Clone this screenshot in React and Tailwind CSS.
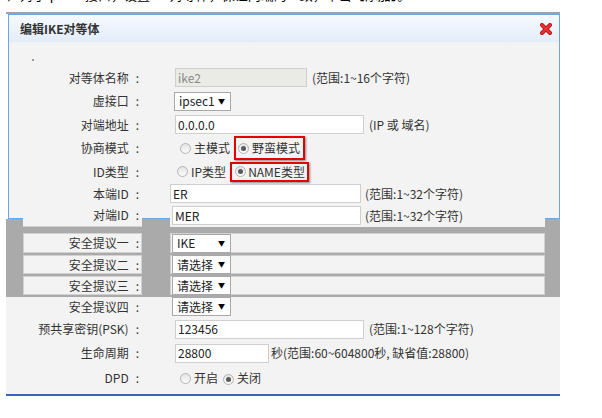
import React from "react";

const Radio = ({ checked }) => (
  <span className="inline-flex w-[11px] h-[11px] shrink-0 rounded-full border border-[#b3b3b3] bg-[linear-gradient(#e4e4e4,#fbfbfb)] items-center justify-center">
    {checked && <span className="w-[5px] h-[5px] rounded-full bg-[#5a5a5a]" />}
  </span>
);

const Colon = () => <span className="ml-[7px]">:</span>;

const Select = ({ children, cls }) => (
  <div className={"h-[19px] border border-[#a8a8a8] bg-white flex items-center pl-[4px] text-[#222] " + cls}>
    <span>{children}</span>
    <span className="ml-auto mr-[5px] text-[7px] text-black">▼</span>
  </div>
);

const Input = ({ children, cls }) => (
  <div className={"h-[19px] border border-[#cfcfcf] bg-white flex items-center pl-[2px] text-[#222] " + cls}>
    {children}
  </div>
);

const CloseIcon = () => (
  <svg width="12" height="12" viewBox="0 0 12 12">
    <path d="M2 2 L10 10 M10 2 L2 10" stroke="#b01818" strokeWidth="4" strokeLinecap="round" />
    <path d="M2 2 L10 10 M10 2 L2 10" stroke="#ee3030" strokeWidth="2.4" strokeLinecap="round" />
  </svg>
);

const GapLeft = () => (
  <div className="w-[17px] flex flex-col">
    <div className="h-[14px] ml-[2px] border-l border-[#6fa3e3] bg-[#f3f3f3]" />
    <div className="h-px ml-[2px] bg-[#6fa3e3]" />
    <div className="flex-1 bg-[#aaaaaa]" />
  </div>
);
const GapMid = () => (
  <div className="w-[28px] flex flex-col">
    <div className="h-[14px] bg-[#f3f3f3]" />
    <div className="h-px bg-[#6fa3e3]" />
    <div className="flex-1 bg-[#aaaaaa]" />
  </div>
);
const GapRight = () => (
  <div className="w-[15px] flex flex-col">
    <div className="h-[14px] border-r border-[#6fa3e3] bg-[#f3f3f3]" />
    <div className="h-px bg-[#6fa3e3]" />
    <div className="flex-1 bg-[#aaaaaa]" />
  </div>
);

const ProposalRow = ({ label, value, cls }) => (
  <div className={"flex " + cls}>
    <div className="w-[17px]" />
    <div className="w-[119px] bg-[#f3f3f3] border border-[#d2d2d2] flex items-center justify-end pr-[2px]">
      {label}
      <Colon />
    </div>
    <div className="w-[28px]" />
    <div className="w-[375px] bg-[#f3f3f3] border border-[#d2d2d2] flex items-center pl-px">
      <Select cls="w-[59px]">{value}</Select>
    </div>
    <div className="w-[15px]" />
  </div>
);

export default function App() {
  return (
    <div className="w-[602px] h-[418px] overflow-hidden bg-white text-[#333] text-[12px] leading-none font-['Noto_Sans_CJK_SC',sans-serif]">
      <div className="h-[12px] overflow-hidden">
        <div className="-mt-[12px] text-[13px] leading-[13px] text-black whitespace-nowrap">
          2）对于ipsec1接口，设置IKE对等体，保证两端的一致，单击【添加】。
        </div>
      </div>
      <div className="ml-[6px] w-[554px]">
        <div className="h-[2px] bg-[#a2a2a2]" />
        <div className="ml-[2px] w-[552px] border-x border-t border-[#6fa3e3] bg-[#f3f3f3]">
          <div className="h-[27px] flex items-center justify-between pl-[11px] pr-[7px] bg-[linear-gradient(#f6faff,#e2ecf9)]">
            <span className="font-bold text-[12px] text-[#333]">编辑IKE对等体</span>
            <CloseIcon />
          </div>
          <div className="h-[24px] pt-[17px] pl-[23px]">
            <div className="w-[2px] h-[2px] bg-[#9a9a9a]" />
          </div>
          <div className="flex items-center h-[23px]">
            <div className="w-[130px] text-right">对等体名称<Colon /></div>
            <div className="ml-[36px] flex items-center">
              <div className="w-[132px] h-[19px] border border-[#cfcfcf] bg-[#ebebe6] flex items-center pl-[2px] text-[#8a8a8a]">ike2</div>
              <span className="ml-[5px]">(范围:1~16个字符)</span>
            </div>
          </div>
          <div className="flex items-center h-[24px]">
            <div className="w-[130px] text-right">虚接口<Colon /></div>
            <div className="ml-[35px]">
              <Select cls="w-[57px]">ipsec1</Select>
            </div>
          </div>
          <div className="flex items-center h-[23px]">
            <div className="w-[130px] text-right">对端地址<Colon /></div>
            <div className="ml-[36px] flex items-center">
              <Input cls="w-[189px]">0.0.0.0</Input>
              <span className="ml-[5px]">(IP 或 域名)</span>
            </div>
          </div>
          <div className="flex items-center h-[24px]">
            <div className="w-[130px] text-right">协商模式<Colon /></div>
            <div className="ml-[41px] flex items-center">
              <Radio />
              <span className="ml-[3px]">主模式</span>
              <span className="ml-[4px] -my-[4px] h-[24px] border-2 border-[#e50000] shadow-[1px_1px_2px_rgba(0,0,0,0.45)] flex items-center pl-[2px] pr-[3px]">
                <Radio checked />
                <span className="ml-[3px]">野蛮模式</span>
              </span>
            </div>
          </div>
          <div className="flex items-center h-[23px]">
            <div className="w-[130px] text-right">ID类型<Colon /></div>
            <div className="ml-[38px] flex items-center">
              <Radio />
              <span className="ml-[3px]">IP类型</span>
              <span className="ml-[4px] h-[20px] border-2 border-[#e50000] shadow-[1px_1px_2px_rgba(0,0,0,0.45)] flex items-center pl-[3px] pr-[2px]">
                <Radio checked />
                <span className="ml-[2px]">NAME类型</span>
              </span>
            </div>
          </div>
          <div className="flex items-center h-[21px]">
            <div className="w-[130px] text-right">本端ID<Colon /></div>
            <div className="ml-[31px] flex items-center">
              <Input cls="w-[191px]">ER</Input>
              <span className="ml-[4px]">(范围:1~32个字符)</span>
            </div>
          </div>
        </div>

        <div className="flex h-[23px]">
          <GapLeft />
          <div className="w-[119px] bg-[#f3f3f3] border-b border-[#d2d2d2] flex items-center justify-end pr-[3px]">
            对端ID<Colon />
          </div>
          <GapMid />
          <div className="w-[375px] bg-[#f3f3f3] flex items-center pl-[2px]">
            <Input cls="w-[189px]">MER</Input>
            <span className="ml-[4px]">(范围:1~32个字符)</span>
          </div>
          <GapRight />
        </div>

        <div className="bg-[#aaaaaa] pt-[6px] pb-[2px] flex flex-col gap-[2px]">
          <ProposalRow label="安全提议一" value="IKE" cls="h-[20px]" />
          <ProposalRow label="安全提议二" value="请选择" cls="h-[19px]" />
          <ProposalRow label="安全提议三" value="请选择" cls="h-[19px]" />
        </div>

        <div className="bg-[#f3f3f3] pb-[2px] border-b-2 border-[#3a66b4]">
          <div className="flex items-center h-[19px]">
            <div className="w-[133px] text-right">安全提议四<Colon /></div>
            <div className="ml-[33px]">
              <Select cls="w-[59px]">请选择</Select>
            </div>
          </div>
          <div className="flex items-center h-[26px]">
            <div className="w-[133px] text-right">预共享密钥(PSK)<Colon /></div>
            <div className="ml-[36px] flex items-center">
              <Input cls="w-[189px]">123456</Input>
              <span className="ml-[5px]">(范围:1~128个字符)</span>
            </div>
          </div>
          <div className="flex items-center h-[22px]">
            <div className="w-[133px] text-right">生命周期<Colon /></div>
            <div className="ml-[36px] flex items-center">
              <Input cls="w-[94px]">28800</Input>
              <span className="ml-[2px]">秒(范围:60~604800秒, 缺省值:28800)</span>
            </div>
          </div>
          <div className="flex items-center h-[28px]">
            <div className="w-[133px] text-right">DPD<Colon /></div>
            <div className="ml-[41px] flex items-center">
              <Radio />
              <span className="ml-[3px]">开启</span>
              <span className="ml-[5px]"><Radio checked /></span>
              <span className="ml-[3px]">关闭</span>
            </div>
          </div>
        </div>
      </div>
    </div>
  );
}
